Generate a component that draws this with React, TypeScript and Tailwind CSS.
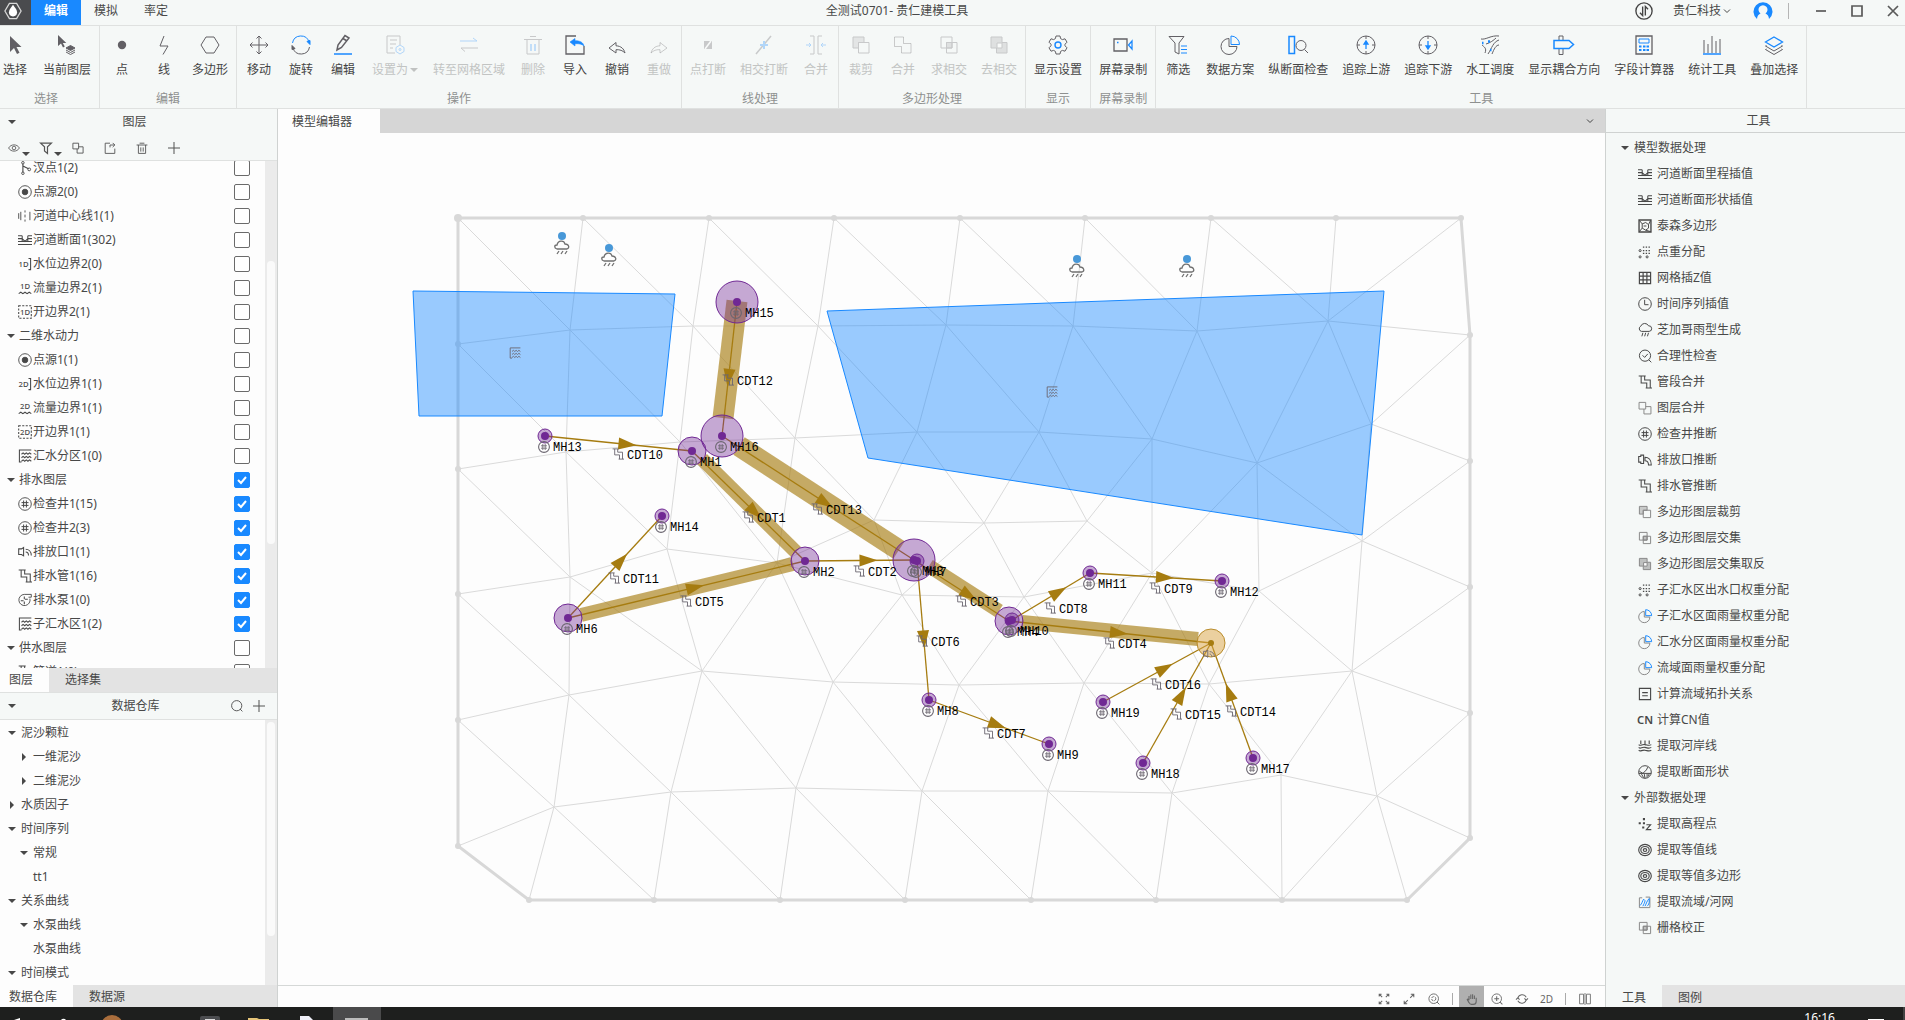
import React, { useState } from "react";
import clsx from "clsx";

const BLUE = "#1989ff";

const icons: Record<string, React.ReactNode> = {
  // ribbon
  cursor: <path d="M5 1v16l4-4 3 6 2.500-1.200-3-5.800h5z" fill="currentColor" stroke="none" />,
  layerCursor: (
    <>
      <path d="M1 0v11l3-2.500 2 4 1.800-1-2-3.500h3.500z" fill="currentColor" stroke="none" />
      <path d="M13.500 10.500l4.500 2.500-4.500 2.500L9 13z" fill="currentColor" />
      <path d="M9 15l4.500 2.500L18 15M9 17l4.500 2.500L18 17" />
    </>
  ),
  dot: <circle cx="10" cy="10" r="4.200" fill="currentColor" stroke="none" />,
  polyline: <path d="M10 1L6 11h8l-5 8.500" />,
  hexagon: <path d="M6 2h8l5 8-5 8H6l-5-8z" />,
  move: <path d="M10 1v18M1 10h18M7.500 3.500L10 1l2.500 2.500M7.500 16.500L10 19l2.500-2.500M3.500 7.500L1 10l2.500 2.500M16.500 7.500L19 10l-2.500 2.500" />,
  rotate: (
    <>
      <path d="M1.500 8a8.500 8.500 0 0 1 16.500-1" stroke={BLUE} />
      <path d="M16 6.500l3-1v4z" fill={BLUE} stroke={BLUE} />
      <path d="M18.500 12a8.500 8.500 0 0 1-16.500 1" />
      <path d="M4 13.500l-3 1v-4z" fill="currentColor" />
    </>
  ),
  pencil: (
    <>
      <path d="M4 15l1-5 7-9.500 4 2.500-7.500 9.500zM10 3.500l4 2.500" strokeWidth="1.500" />
      <path d="M1 19h18" stroke={BLUE} strokeWidth="1.500" />
    </>
  ),
  setAs: (
    <>
      <path d="M10 18H2V1h13v9M5 5h7M5 9h6M5 13h3" />
      <path d="M15 10l4 2.500v4L15 19l-4-2.500v-4z" stroke={BLUE} />
      <circle cx="15" cy="14.500" r="1" stroke={BLUE} />
    </>
  ),
  swap: (
    <>
      <path d="M1 6h17l-4-3" stroke={BLUE} />
      <path d="M19 13H2l4 3.500" />
    </>
  ),
  trash: (
    <>
      <path d="M1 4.500h18M7 1.500h6M4 5v14h12V5" />
      <path d="M8 9v7M12 9v7" stroke={BLUE} strokeWidth="1.500" />
    </>
  ),
  importIn: (
    <>
      <path d="M11 1H1v18h18V11" strokeWidth="1.300" />
      <path d="M5 7l5-3.500v2.200c5 0 8 1.500 9 5.300-2-2-5-2.500-9-2.300V11z" fill={BLUE} stroke={BLUE} strokeWidth=".6" />
    </>
  ),
  undo: <path d="M2 13l7-5.500v3.300c5 .2 8 3 9 7.200-2.500-2.500-5-3.500-9-3.300V18z" />,
  redo: <path d="M18 13l-7-5.500v3.300c-5 .2-8 3-9 7.200 2.500-2.500 5-3.500 9-3.300V18z" />,
  breakPoint: (
    <>
      <path d="M6 6h8v8H6z" fill="currentColor" stroke="none" />
      <path d="M7 14l6-8" stroke="#fff" strokeWidth="1.500" />
    </>
  ),
  breakCross: (
    <>
      <path d="M17 1L2 19" strokeWidth="1.500" />
      <path d="M6 10h8M10 6v8" stroke={BLUE} strokeWidth="2" />
    </>
  ),
  mergeLine: (
    <>
      <path d="M4 1h4v18H4M16 1h-4v18h4" />
      <path d="M0 10h5M3 8l2 2-2 2M20 10h-5M17 8l-2 2 2 2" stroke={BLUE} />
    </>
  ),
  clip: (
    <>
      <path d="M2 2h11v5.500H7.500V13H2z" fill="currentColor" fillOpacity=".4" />
      <path d="M7.500 7.500H18V18H7.500z" />
    </>
  ),
  merge: <path d="M1.500 2h9v6.500H18V18H8.500v-6.500h-7z" />,
  mergeTwo: <path d="M1.500 2h9.500v9.500H1.500zM11 8h7.500v10.500H8.500v-7" />,
  intersect: (
    <>
      <path d="M2 2h11v11H2zM7.500 7.500H18V18H7.500z" />
      <path d="M7.500 7.500H13V13H7.500z" fill="currentColor" fillOpacity=".5" />
    </>
  ),
  exclude: (
    <>
      <path d="M2 2h11v5.500h5V18H7.500v-5H2z" fill="currentColor" fillOpacity=".5" />
      <path d="M8 8h5v5H8z" fill="#fff" />
    </>
  ),
  gear: (
    <>
      <path d="M8 1h4l.6 2.600 1.800 1L17 3.800l2 3.400-2 2v1.600l2 2-2 3.400-2.600-.8-1.800 1L12 19H8l-.6-2.600-1.800-1-2.600.8-2-3.400 2-2V9.200l-2-2 2-3.400 2.600.8 1.800-1z" />
      <circle cx="10" cy="10" r="3" stroke={BLUE} strokeWidth="1.400" />
    </>
  ),
  record: (
    <>
      <path d="M1 4h13v12H1z" strokeWidth="1.300" />
      <path d="M4 7.500h1.500" stroke={BLUE} strokeWidth="1.500" />
      <path d="M19 6v8l-3.500-4z" stroke={BLUE} strokeWidth="1.300" />
    </>
  ),
  filter: (
    <>
      <path d="M1 1.500h15l-5 6.500v11l-4-2V8z" />
      <path d="M13 11h6M13 14.500h6M13 18h6" stroke={BLUE} />
    </>
  ),
  pie: (
    <>
      <path d="M9 3.500a8 8 0 1 0 8 8H9z" />
      <path d="M11 1v8.500h8.500A8.500 8.500 0 0 0 11 1z" stroke={BLUE} />
    </>
  ),
  profile: (
    <>
      <path d="M1 1.500h5.500v17H1z" stroke={BLUE} strokeWidth="1.500" />
      <circle cx="13" cy="10.500" r="5" />
      <path d="M16.500 14.500L20 18" />
    </>
  ),
  traceUp: (
    <>
      <circle cx="10" cy="10" r="9" />
      <path d="M10 1v3M10 16v3M1 10h3M16 10h3" />
      <path d="M10 14V7M8 9l2-3 2 3z" fill={BLUE} stroke={BLUE} strokeWidth="1.300" />
    </>
  ),
  traceDown: (
    <>
      <circle cx="10" cy="10" r="9" />
      <path d="M10 1v3M10 16v3M1 10h3M16 10h3" />
      <path d="M10 6v7M8 11l2 3 2-3z" fill={BLUE} stroke={BLUE} strokeWidth="1.300" />
    </>
  ),
  schedule: (
    <>
      <path d="M1 4c5 1 10-4 18-3M5 18c2-5-1-6-3-8M8 19c4-6 5-12 11-14M12 19c2-5 4-9 7-9M6 9c4-1 8-4 10-6" />
      <path d="M8 6.500h2M2 8h1.500M10 15h1.500" stroke={BLUE} strokeWidth="2.500" />
    </>
  ),
  signpost: (
    <>
      <path d="M5 5V1h4v4M5 14v5.500h4V14" />
      <path d="M0 5.500h15l4.500 4-4.500 4H0z" stroke={BLUE} strokeWidth="1.500" />
    </>
  ),
  calculator: (
    <>
      <path d="M2 1h16v18H2z" strokeWidth="1.300" />
      <path d="M5 4h10v4H5z" stroke={BLUE} />
      <path d="M5 11.500h2.500M9 11.500h2.500M12.500 11.500H15M5 15h2.500M9 15h2.500M12.500 15H15" stroke={BLUE} strokeWidth="2" />
    </>
  ),
  bars: (
    <>
      <path d="M2 5v13M6 9v9M10 1v17M14 6v12M18 4v14" />
      <path d="M1 19h18" stroke={BLUE} strokeWidth="1.500" />
    </>
  ),
  overlay: (
    <>
      <path d="M10 2l8.500 5-8.500 5-8.500-5z" stroke={BLUE} strokeWidth="1.300" />
      <path d="M2.500 10.500L1.500 11l8.500 5 8.500-5-1-.5M2.500 14l-1 .5 8.500 5 8.500-5-1-.5" />
    </>
  ),
  // layer and tool lists
  branch: (
    <>
      <path d="M7 4v12M7 7l8 4" strokeWidth="1.600" />
      <circle cx="7" cy="2.500" r="1.800" />
      <circle cx="7" cy="17.500" r="1.800" />
      <circle cx="16" cy="12" r="2" />
    </>
  ),
  source: (
    <>
      <circle cx="10" cy="10" r="9" />
      <circle cx="10" cy="10" r="4" fill="currentColor" />
    </>
  ),
  centerline: <path d="M4 4v12M10 2v3M10 8v4M10 15v3M17 4v12M1 6v8" />,
  section: <path d="M0 4h6M0 8h6M0 12h6M0 16.500h20M14 4h6M14 8h6M14 12h6M6 4v8h8V4M6 8l4 4 4-4" strokeWidth="1.500" />,
  catchment: (
    <path
      d="M19 1.500H2v17h3M5 7.500l2.300-2 2.300 2 2.300-2 2.300 2 2.300-2L19 7.500M5 12.500l2.300-2 2.300 2 2.300-2 2.300 2 2.300-2 2.500 2M5 17.500l2.300-2 2.300 2 2.300-2 2.300 2 2.300-2 2.500 2"
      strokeWidth="1.500"
    />
  ),
  manhole: (
    <>
      <circle cx="10" cy="10" r="9" />
      <path d="M8 5v10M12 5v10M5 8h10M5 12h10" strokeWidth="1.400" />
    </>
  ),
  outlet: <path d="M1 5h3V3h4v12H4v-2H1zM10 6c5 0 9 4 9 11h-4c0-4-2-6-5-6z" strokeWidth="1.500" />,
  outletSmall: <path d="M1 5.500h4l3-2v12l-3-2H1zM11 6c4 0 8 3 8 9M11 10c2 0 4 2 4 5" strokeWidth="1.500" />,
  pipe: <path d="M1 1.500h10M4.500 1.500v10h8v7M9.500 1.500v5.500h8v11.500M11 18.500h9" strokeWidth="1.500" />,
  pump: (
    <>
      <path d="M17 8a8 8 0 1 1-8-6h10v4h-4" />
      <path d="M9 5v4M9 12v4M4 11h4M10 9h4" strokeWidth="1.500" />
    </>
  ),
  voronoi: (
    <>
      <path d="M1.500 1.500h17v17h-17z" strokeWidth="2" />
      <path d="M6 7l5-2 4 3v5l-4 3-5-3zM2 2l4 5M18 2l-3 6M2 18l4-5M18 18l-7-2M8 10h4" />
    </>
  ),
  points: (
    <>
      <path d="M7 3h2M11 3h2M15 3h2M7 8h2M11 8h2M15 8h2M7 12h2M11 12h2M15 12h2" strokeWidth="2" />
      <circle cx="3" cy="8" r="1.500" />
      <circle cx="3" cy="17" r="1.500" />
      <circle cx="13" cy="17" r="1.500" />
    </>
  ),
  grid: <path d="M2 2h16v16H2zM7.300 2v16M12.700 2v16M2 7.300h16M2 12.700h16" strokeWidth="1.700" />,
  clock: (
    <>
      <circle cx="10" cy="10" r="9" />
      <path d="M9.500 4v7H15" />
    </>
  ),
  rain: <path d="M5 12a4 4 0 0 1-1-7.500A6 6 0 0 1 15 4a4 4 0 0 1 1 8zM7 14l-1.500 5M11 14l-1.500 5M15 14l-1.500 5" strokeWidth="1.400" />,
  check: (
    <>
      <circle cx="10" cy="9.500" r="8" />
      <path d="M6.500 9l3 3 4.500-5M15.500 15.500L19 19" strokeWidth="1.400" />
    </>
  ),
  topology: <path d="M2 2h16v16H2zM6 8h8M6 12.500h8" strokeWidth="1.600" />,
  shore: <path d="M4 2v5M10 2v5M16 2v5M1 8c3 3 4-1 9 0s6 2 9 0M1 12c3 3 4-1 9 0s6 2 9 0M1 16c3 3 4-1 9 0s6 2 9 0" strokeWidth="1.600" />,
  sectionShape: (
    <>
      <circle cx="10" cy="10" r="9" />
      <path d="M2 9l5 3 5-5 2-4M1 12h18M5 13l3 5M9 13l1 6M13 13v5M16 12l-1 4" strokeWidth="1.400" />
    </>
  ),
  elevation: (
    <>
      <path d="M7 3h3M1 9h3M7 9h3M6 15h3" strokeWidth="3" />
      <path d="M12 11h6l-6 7h7" strokeWidth="1.600" />
    </>
  ),
  contour: (
    <>
      <ellipse cx="10" cy="10" rx="9" ry="8" strokeWidth="1.600" />
      <ellipse cx="10" cy="10" rx="6" ry="5" strokeWidth="1.600" />
      <ellipse cx="10" cy="10" rx="2.500" ry="2" strokeWidth="1.600" />
    </>
  ),
  basin: (
    <>
      <path d="M6 4H2v14h15V3h-6" />
      <path d="M3 15c3-3 3-6 5-9l2 2c0 3-2 5-3 8M10 16c2-4 3-8 6-11v6c-1 3-2 4-3 5" stroke={BLUE} strokeWidth="1.400" />
    </>
  ),
  // small toolbars
  eye: (
    <>
      <path d="M1 10c4-7 14-7 18 0-4 7-14 7-18 0z" strokeWidth="1.400" />
      <circle cx="10" cy="10" r="3" strokeWidth="1.400" />
    </>
  ),
  funnel: <path d="M1 2h18l-6.500 6v11l-5-4V8z" strokeWidth="2" />,
  exportOut: <path d="M10 2H2v17h16v-8M10 9V5h8M14.500 1.500L18 5l-3.500 3.500" strokeWidth="1.500" />,
  bin: <path d="M1 5h18M6 2h8M4 5v14h12V5M8 9v7M12 9v7" strokeWidth="1.500" />,
  plus: <path d="M10 0v20M0 10h20" strokeWidth="1.700" />,
  search: (
    <>
      <circle cx="9.500" cy="9.500" r="8.500" strokeWidth="1.600" />
      <path d="M15 15l4 4" strokeWidth="1.600" />
    </>
  ),
  extent: <path d="M7 7L2 2M2 6V2h4M13 7l5-5M14 2h4v4M7 13l-5 5M2 14v4h4M13 13l5 5M18 14v4h-4" strokeWidth="1.700" />,
  expand: <path d="M12 8l6-6M13 2h5v5M8 12l-6 6M2 13v5h5" strokeWidth="1.700" />,
  zoomFit: (
    <>
      <circle cx="9.500" cy="9.500" r="8" strokeWidth="1.500" />
      <circle cx="9.500" cy="9.500" r="3.500" strokeWidth="1.500" strokeDasharray="4 1.500" />
      <path d="M15 15l4 4" strokeWidth="1.600" />
    </>
  ),
  hand: <path d="M5 12V5M8 10V2.500M11 10V2M14 10V4M17 8v6c0 3-2 5-5 5H9c-2 0-3-1-4-3l-3-5c1-1.500 2-.5 3 1" strokeWidth="1.800" />,
  zoomIn: (
    <>
      <circle cx="9.500" cy="9.500" r="8" strokeWidth="1.500" />
      <path d="M5.500 9.500h8M9.500 5.500v8M15 15l4 4" strokeWidth="1.700" />
    </>
  ),
  cycle: <path d="M3 9a7.500 7.500 0 0 1 14-2M17 11a7.500 7.500 0 0 1-14 2M0 11l3-3 3 3M20 9l-3 3-3-3" strokeWidth="1.700" />,
  split: <path d="M7.500 2H1v16h6.500zM12.500 2H19v16h-6.500zM10 0v20" strokeWidth="1.400" />,
};

const Icon = ({ name, className }: { name: string; className?: string }) => {
  // boundary icons carry a short tag (1D / 2D) inside the drawing
  const tag = name.match(/^(level|flow|open)([12])$/);
  if (tag || name === "cn") {
    return (
      <svg viewBox="0 0 20 20" className={clsx("overflow-visible", className)} fill="none" stroke="currentColor">
        <text
          x={tag && tag[1] === "level" ? 8 : 10}
          y={tag ? (tag[1] === "flow" ? 12 : 14) : 16}
          textAnchor="middle"
          fontSize={tag ? 11 : 16}
          fill="currentColor"
          stroke="none"
          className={tag ? "font-medium" : "font-semibold"}
        >
          {tag ? `${tag[2]}D` : "CN"}
        </text>
        {tag && tag[1] === "level" && <path d="M15 2h3v16h-3" strokeWidth="1.500" />}
        {tag && tag[1] === "flow" && <path d="M1 18l3-2 3 2 3-2 3 2 3-2 3 2" strokeWidth="1.500" />}
        {tag && tag[1] === "open" && <path d="M1 1h18v18H1z" strokeWidth="1.500" strokeDasharray="3 2" />}
      </svg>
    );
  }
  return (
    <svg viewBox="0 0 20 20" className={clsx("overflow-visible", className)} fill="none" stroke="currentColor">
      {icons[name]}
    </svg>
  );
};

const Caret = ({ open = true, className }: { open?: boolean; className?: string }) => (
  <svg viewBox="0 0 8 8" className={clsx("h-2 w-2 shrink-0", className)}>
    <path d={open ? "M0 2h8L4 6z" : "M2 0v8l4-4z"} fill="#484848" />
  </svg>
);

const ribbon = [
  { title: "选择", items: [["cursor", "选择"], ["layerCursor", "当前图层"]] },
  { title: "编辑", items: [["dot", "点"], ["polyline", "线"], ["hexagon", "多边形"]] },
  {
    title: "操作",
    items: [
      ["move", "移动"],
      ["rotate", "旋转"],
      ["pencil", "编辑"],
      ["setAs", "设置为", "off", "menu"],
      ["swap", "转至网格区域", "off"],
      ["trash", "删除", "off"],
      ["importIn", "导入"],
      ["undo", "撤销"],
      ["redo", "重做", "off"],
    ],
  },
  { title: "线处理", items: [["breakPoint", "点打断", "off"], ["breakCross", "相交打断", "off"], ["mergeLine", "合并", "off"]] },
  {
    title: "多边形处理",
    items: [["clip", "裁剪", "off"], ["merge", "合并", "off"], ["intersect", "求相交", "off"], ["exclude", "去相交", "off"]],
  },
  { title: "显示", items: [["gear", "显示设置"]] },
  { title: "屏幕录制", items: [["record", "屏幕录制"]] },
  {
    title: "工具",
    items: [
      ["filter", "筛选"],
      ["pie", "数据方案"],
      ["profile", "纵断面检查"],
      ["traceUp", "追踪上游"],
      ["traceDown", "追踪下游"],
      ["schedule", "水工调度"],
      ["signpost", "显示耦合方向"],
      ["calculator", "字段计算器"],
      ["bars", "统计工具"],
      ["overlay", "叠加选择"],
    ],
  },
];

// icon is empty for a group row
const layers: [string, string, boolean][] = [
  ["branch", "汊点1(2)", false],
  ["source", "点源2(0)", false],
  ["centerline", "河道中心线1(1)", false],
  ["section", "河道断面1(302)", false],
  ["level1", "水位边界2(0)", false],
  ["flow1", "流量边界2(1)", false],
  ["open1", "开边界2(1)", false],
  ["", "二维水动力", false],
  ["source", "点源1(1)", false],
  ["level2", "水位边界1(1)", false],
  ["flow2", "流量边界1(1)", false],
  ["open2", "开边界1(1)", false],
  ["catchment", "汇水分区1(0)", false],
  ["", "排水图层", true],
  ["manhole", "检查井1(15)", true],
  ["manhole", "检查井2(3)", true],
  ["outletSmall", "排放口1(1)", true],
  ["pipe", "排水管1(16)", true],
  ["pump", "排水泵1(0)", true],
  ["catchment", "子汇水区1(2)", true],
  ["", "供水图层", false],
  ["pipe", "管道1(0)", false],
];

const dataTree: { label: string; level: number; state: "open" | "closed" | "leaf" }[] = [
  { label: "泥沙颗粒", level: 0, state: "open" },
  { label: "一维泥沙", level: 1, state: "closed" },
  { label: "二维泥沙", level: 1, state: "closed" },
  { label: "水质因子", level: 0, state: "closed" },
  { label: "时间序列", level: 0, state: "open" },
  { label: "常规", level: 1, state: "open" },
  { label: "tt1", level: 1, state: "leaf" },
  { label: "关系曲线", level: 0, state: "open" },
  { label: "水泵曲线", level: 1, state: "open" },
  { label: "水泵曲线", level: 1, state: "leaf" },
  { label: "时间模式", level: 0, state: "open" },
];

const toolGroups = [
  {
    title: "模型数据处理",
    items: [
      ["section", "河道断面里程插值"],
      ["section", "河道断面形状插值"],
      ["voronoi", "泰森多边形"],
      ["points", "点重分配"],
      ["grid", "网格插Z值"],
      ["clock", "时间序列插值"],
      ["rain", "芝加哥雨型生成"],
      ["check", "合理性检查"],
      ["pipe", "管段合并"],
      ["mergeTwo", "图层合并"],
      ["manhole", "检查井推断"],
      ["outlet", "排放口推断"],
      ["pipe", "排水管推断"],
      ["clip", "多边形图层裁剪"],
      ["intersect", "多边形图层交集"],
      ["exclude", "多边形图层交集取反"],
      ["points", "子汇水区出水口权重分配"],
      ["pie", "子汇水区面雨量权重分配"],
      ["pie", "汇水分区面雨量权重分配"],
      ["pie", "流域面雨量权重分配"],
      ["topology", "计算流域拓扑关系"],
      ["cn", "计算CN值"],
      ["shore", "提取河岸线"],
      ["sectionShape", "提取断面形状"],
    ],
  },
  {
    title: "外部数据处理",
    items: [
      ["elevation", "提取高程点"],
      ["contour", "提取等值线"],
      ["contour", "提取等值多边形"],
      ["basin", "提取流域/河网"],
      ["intersect", "栅格校正"],
    ],
  },
];

const paleIcons = ["mergeTwo", "clip", "intersect", "exclude", "pie", "basin"];

type Pt = [number, number];

const boundary: Pt[] = [
  [458, 218], [583, 218], [709, 218], [834, 218], [960, 218], [1085, 218], [1211, 218], [1336, 218], [1461, 218],
  [1470, 335], [1470, 461], [1470, 587], [1470, 713], [1470, 838],
  [1407, 900], [1282, 900], [1156, 900], [1031, 900], [905, 900], [780, 900], [654, 900], [529, 900],
  [458, 846], [458, 720], [458, 594], [458, 469], [458, 344],
];

const inner: Record<string, Pt> = {
  a0: [570, 330], a1: [693, 326], a2: [818, 326], a3: [946, 325], a4: [1073, 326], a5: [1197, 331], a6: [1328, 321],
  b0: [566, 452], b1: [680, 442], b2: [795, 438], b3: [917, 432], b4: [1039, 432], b5: [1152, 439], b6: [1257, 463], b7: [1371, 424],
  c0: [570, 577], c1: [667, 549], c2: [777, 563], c3: [874, 520], c4: [984, 523], c5: [1087, 521], c6: [1362, 541],
  d0: [902, 595], d1: [1024, 597], d2: [1152, 573], d3: [1259, 591],
  e0: [569, 695], e1: [702, 671], e2: [833, 682], e3: [959, 685], e4: [1084, 683], e5: [1209, 684], e6: [1352, 671],
  f0: [554, 807], f1: [671, 792], f2: [796, 788], f3: [922, 791], f4: [1048, 791], f5: [1172, 793], f6: [1281, 775], f7: [1377, 796],
};

// a number points into boundary, a name into inner
const edges = (
  "0-a0 1-a0 1-a1 2-a1 2-a2 3-a2 3-a3 4-a3 4-a4 5-a4 5-a5 6-a5 6-a6 7-a6 8-a6 9-a6 " +
  "26-a0 a0-a1 a1-a2 a2-a3 a3-a4 a4-a5 a5-a6 a0-b0 a0-b1 26-b0 a1-b1 a1-b2 a2-b2 a2-b3 a3-b3 a3-b4 a4-b4 a4-b5 a5-b5 a5-b6 a6-b6 a6-b7 9-b7 10-b7 b6-b7 " +
  "25-b0 b0-b1 b1-b2 b2-b3 b3-b4 b4-b5 b5-b6 b6-c6 10-c6 b7-c6 " +
  "25-c0 b0-c0 b0-c1 b1-c1 b1-c2 b2-c2 b2-c3 b3-c3 b3-c4 b4-c4 b4-c5 b5-c5 b5-d2 b6-d2 b6-d3 c6-d3 c6-e6 c6-11 " +
  "24-c0 c0-c1 c1-c2 c2-c3 c2-d0 c3-c4 c3-d0 c4-d0 c4-d1 c4-c5 c5-d1 c5-d2 d1-d2 d2-d3 d0-d1 " +
  "24-e0 c0-e0 c0-e1 c1-e1 c2-e1 c2-e2 d0-e2 d0-e3 d1-e3 d1-e4 d2-e4 d2-e5 d3-e5 d3-e6 e6-11 e6-12 " +
  "23-e0 e0-e1 e1-e2 e2-e3 e3-e4 e4-e5 e5-e6 23-f0 e0-f0 e0-f1 e1-f1 e1-f2 e2-f2 e2-f3 e3-f3 e3-f4 e4-f4 e4-f5 e5-f5 e5-f6 e6-f6 e6-f7 12-f7 13-f7 " +
  "f0-f1 f1-f2 f2-f3 f3-f4 f4-f5 f5-f6 f6-f7 22-f0 21-f0 20-f0 20-f1 19-f1 19-f2 18-f2 18-f3 17-f3 17-f4 16-f4 16-f5 15-f5 15-f6 15-f7 14-f7"
)
  .split(" ")
  .map((e) => e.split("-").map((k) => inner[k] ?? boundary[Number(k)]));

const nodes: Record<string, { at: Pt; r: number }> = {
  MH15: { at: [737, 302], r: 21 },
  MH16: { at: [722, 436], r: 21 },
  MH1: { at: [692, 451], r: 14 },
  MH13: { at: [545, 436], r: 7 },
  MH14: { at: [662, 516], r: 7 },
  MH6: { at: [568, 618], r: 14 },
  MH2: { at: [805, 561], r: 14 },
  MH3: { at: [914, 560], r: 21 },
  MH7: { at: [917, 561], r: 7 },
  MH4: { at: [1009, 621], r: 14 },
  MH10: { at: [1012, 620], r: 7 },
  MH11: { at: [1090, 573], r: 7 },
  MH12: { at: [1222, 581], r: 7 },
  MH8: { at: [929, 700], r: 7 },
  MH9: { at: [1049, 744], r: 7 },
  MH19: { at: [1103, 702], r: 7 },
  MH18: { at: [1143, 763], r: 7 },
  MH17: { at: [1253, 758], r: 7 },
};

const outlet: Pt = [1211, 643];

const conduits: { id: string; from: string; to: string; label: Pt }[] = [
  { id: "CDT1", from: "MH1", to: "MH2", label: [748, 517] },
  { id: "CDT2", from: "MH2", to: "MH3", label: [859, 571] },
  { id: "CDT3", from: "MH3", to: "MH4", label: [961, 601] },
  { id: "CDT4", from: "MH4", to: "OUT", label: [1109, 643] },
  { id: "CDT5", from: "MH6", to: "MH2", label: [686, 601] },
  { id: "CDT6", from: "MH7", to: "MH8", label: [922, 641] },
  { id: "CDT7", from: "MH8", to: "MH9", label: [988, 733] },
  { id: "CDT8", from: "MH10", to: "MH11", label: [1050, 608] },
  { id: "CDT9", from: "MH11", to: "MH12", label: [1155, 588] },
  { id: "CDT10", from: "MH13", to: "MH1", label: [618, 454] },
  { id: "CDT11", from: "MH6", to: "MH14", label: [614, 578] },
  { id: "CDT12", from: "MH15", to: "MH16", label: [728, 380] },
  { id: "CDT13", from: "MH16", to: "MH3", label: [817, 509] },
  { id: "CDT14", from: "MH17", to: "OUT", label: [1231, 711] },
  { id: "CDT15", from: "MH18", to: "OUT", label: [1176, 714] },
  { id: "CDT16", from: "MH19", to: "OUT", label: [1156, 684] },
];

const bands: [number, number, number, number, number][] = [
  [737, 301, 723, 418, 21],
  [702, 459, 796, 552, 14],
  [581, 615, 793, 564, 14],
  [739, 446, 899, 550, 21],
  [929, 566, 999, 611, 14],
  [1022, 622, 1198, 639, 14],
];

const gauges: Pt[] = [[562, 236], [609, 248], [1077, 259], [1187, 259]];

const MapIcon = ({ name, x, y }: { name: string; x: number; y: number }) => (
  <g transform={`translate(${x - 6} ${y - 6}) scale(0.6)`} fill="none" stroke="#6b6670" strokeWidth="1.800">
    {icons[name]}
  </g>
);

const NetworkMap = () => {
  const place = (key: string): Pt => (key === "OUT" ? outlet : nodes[key].at);

  return (
    <svg viewBox="278 133 1327 852" className="h-full w-full" fontFamily='"Liberation Mono", monospace' fontSize="12">
      <g stroke="#dadada">
        {edges.map(([p, q], i) => (
          <line key={i} x1={p[0]} y1={p[1]} x2={q[0]} y2={q[1]} />
        ))}
      </g>
      <polygon points={boundary.join(" ")} fill="none" stroke="#d8d8d8" strokeWidth="3" />
      {boundary.map(([x, y], i) => (
        <circle key={i} cx={x} cy={y} r={i === 0 ? 4 : 3} fill="#d8d8d8" />
      ))}

      <g fill={BLUE} fillOpacity=".44" stroke={BLUE}>
        <polygon points="413,291 675,294 662,416 419,416" />
        <polygon points="827,311 1384,291 1362,535 868,458" />
      </g>
      <MapIcon name="catchment" x={515} y={353} />
      <MapIcon name="catchment" x={1052} y={392} />

      {gauges.map(([x, y]) => (
        <g key={x}>
          <circle cx={x} cy={y} r="4" fill="#4898d8" />
          <path
            d={`M${x - 5} ${y + 13}c-3-1-3-4 0-4 1-5 7-5 8-1 4 0 5 4 2 5zM${x - 3} ${y + 15}l-2 3M${x + 1} ${y + 15}l-2 3M${x + 5} ${y + 15}l-2 3`}
            fill="none"
            stroke="#707070"
            strokeWidth="1.300"
          />
        </g>
      ))}

      {bands.map(([x1, y1, x2, y2, w]) => (
        <line key={x1} x1={x1} y1={y1} x2={x2} y2={y2} stroke="#a67c10" strokeOpacity=".64" strokeWidth={w} />
      ))}
      {conduits.map(({ id, from, to }) => {
        const [x1, y1] = place(from);
        const [x2, y2] = place(to);
        const angle = (Math.atan2(y2 - y1, x2 - x1) * 180) / Math.PI;
        return (
          <g key={id}>
            <line x1={x1} y1={y1} x2={x2} y2={y2} stroke="#a67c10" strokeWidth="1.300" />
            <path
              d="M0-6L18 0 0 6z"
              fill="#a67c10"
              transform={`translate(${(x1 + x2) / 2} ${(y1 + y2) / 2}) rotate(${angle})`}
            />
          </g>
        );
      })}

      {Object.entries(nodes).map(([id, { at, r }]) => (
        <g key={id}>
          <circle cx={at[0]} cy={at[1]} r={r} fill="#702894" fillOpacity=".4" stroke="#702894" />
          <circle cx={at[0]} cy={at[1]} r="4" fill="#702894" />
        </g>
      ))}
      <circle cx={outlet[0]} cy={outlet[1]} r="14" fill="#d9a441" fillOpacity=".5" stroke="#b98c2c" />
      <circle cx={outlet[0]} cy={outlet[1]} r="3" fill="#a67c10" />
      <MapIcon name="outletSmall" x={outlet[0] - 2} y={outlet[1] + 11} />

      {conduits.map(({ id, label: [x, y] }) => (
        <g key={id}>
          <MapIcon name="pipe" x={x} y={y} />
          <text x={x + 9} y={y + 5}>{id}</text>
        </g>
      ))}
      {Object.entries(nodes).map(([id, { at: [x, y] }]) => (
        <g key={id}>
          <MapIcon name="manhole" x={x - 1} y={y + 11} />
          <text x={x + 8} y={y + 15}>{id}</text>
        </g>
      ))}
    </svg>
  );
};

const TitleBar = () => (
  <header className="flex h-[26px] shrink-0 border-b border-[#dfe1e0]">
    <div className="flex w-[31px] items-center justify-center bg-[#4a4b4e] pr-1.5 pb-1 text-white">
      <svg viewBox="0 0 20 20" className="h-[18px] w-[18px]" fill="none" stroke="#d8d8d8" strokeWidth="1.400">
        <path d="M6 1.500h8l5 8.500-5 8.500H6L1 10z" />
        <path d="M10 3c3 4 4.500 6 4.500 8.500a4.500 4.500 0 0 1-9 0C5.500 9 7 7 10 3z" fill="#fff" stroke="none" />
      </svg>
    </div>
    <nav className="flex">
      {["编辑", "模拟", "率定"].map((tab, i) => (
        <button
          key={tab}
          className={clsx("w-[50px] pb-1 leading-4", i === 0 ? "bg-[#1989ff] font-bold text-white" : "text-[#484848]")}
        >
          {tab}
        </button>
      ))}
    </nav>
    <h1 className="flex-1 pt-[3px] text-center leading-4">全测试0701- 贵仁建模工具</h1>
    <div className="flex w-[292px] items-center justify-end pb-1">
      <button aria-label="同步" className="mr-5">
        <svg viewBox="0 0 20 20" className="h-[18px] w-[18px]" fill="none" stroke="#444" strokeWidth="1.500">
          <circle cx="10" cy="10" r="9" />
          <path d="M8.500 5v10l-3-3M11.500 15V5l3 3" />
        </svg>
      </button>
      <button className="flex items-center gap-0.5 leading-4">
        贵仁科技
        <svg viewBox="0 0 8 8" className="h-2 w-2" fill="none" stroke="#484848">
          <path d="M1 2.500l3 3 3-3" />
        </svg>
      </button>
      <button aria-label="用户" className="ml-[22px]">
        <svg viewBox="0 0 20 20" className="h-5 w-5">
          <path d="M4 18a9.500 9.500 0 1 1 12 0c0-3-2-5-3.500-5.500a4.500 4.500 0 1 0-5 0C6 13 4 15 4 18z" fill={BLUE} />
        </svg>
      </button>
      <span className="ml-[15px] h-4 w-px bg-[#b5b5b5]" />
      {["M1 6h10", "M1 1h10v10H1z", "M1 1l10 10M11 1L1 11"].map((d, i) => (
        <button key={d} aria-label={["最小化", "最大化", "关闭"][i]} className={i === 0 ? "ml-[26px]" : "ml-6"}>
          <svg viewBox="0 0 12 12" className="h-3 w-3" fill="none" stroke="#5a5a5a" strokeWidth="1.700">
            <path d={d} />
          </svg>
        </button>
      ))}
      <span className="w-1.5" />
    </div>
  </header>
);

const Ribbon = () => (
  <div className="flex h-[83px] shrink-0 border-b border-[#dfe1e0]">
    {ribbon.map((group, g) => (
      <section key={group.title} className={clsx("flex shrink-0 flex-col border-r border-[#dfe1e0] px-px", g === 0 && "-ml-[7px]")}>
        <div className="flex pt-[9px]">
          {group.items.map(([icon, label, off, menu]) => (
            <button
              key={label}
              disabled={!!off}
              className={clsx("flex flex-col items-center gap-[7px]", menu ? "w-[62px]" : "min-w-[42px] px-[7px]")}
            >
              <Icon name={icon} className={clsx("h-5 w-5 text-[#626065]", off && "opacity-30")} />
              <span className={clsx("flex items-center gap-0.5 leading-4", off ? "text-[#c2c4c3]" : "text-[#444]")}>
                {label}
                {menu && <Caret className="opacity-30" />}
              </span>
            </button>
          ))}
        </div>
        <h2 className="mt-[13px] text-center leading-4 text-[#8e908f]">{group.title}</h2>
      </section>
    ))}
  </div>
);

const ScrollTrack = ({ before, thumb, after }: { before: string; thumb: string; after: string }) => (
  <div className="flex w-3 shrink-0 flex-col items-center bg-[#ebebeb]">
    <span className={before} />
    <span className={clsx("w-2 rounded-full bg-[#fafafa]", thumb)} />
    <span className={after} />
  </div>
);

const LayerPanel = () => {
  const [shown, setShown] = useState(layers.map((l) => l[2]));

  return (
    <section className="flex min-h-0 flex-[584] flex-col">
      <div className="border-b border-[#dfe1e0]">
        <div className="flex h-6 items-center px-2 pt-0.5">
          <Caret />
          <h2 className="flex-1 pr-4 text-center leading-4">图层</h2>
        </div>
        <div className="flex h-[27px] items-center gap-5 pt-0.5 pl-2 text-[#555]">
          <button aria-label="可见性" className="-mr-2.5 flex items-end gap-0.5">
            <Icon name="eye" className="h-3 w-3" />
            <Caret className="-mb-1" />
          </button>
          <button aria-label="筛选图层" className="-mr-2.5 flex items-end gap-0.5">
            <Icon name="funnel" className="h-3 w-3" />
            <Caret className="-mb-1" />
          </button>
          <button aria-label="合并图层"><Icon name="mergeTwo" className="h-3 w-3 stroke-[1.5]" /></button>
          <button aria-label="导出图层"><Icon name="exportOut" className="h-3 w-3" /></button>
          <button aria-label="删除图层"><Icon name="bin" className="h-3 w-3" /></button>
          <button aria-label="新建图层"><Icon name="plus" className="h-3 w-3" /></button>
        </div>
      </div>
      <div className="flex min-h-0 flex-1 overflow-hidden bg-[#fdfdfd]">
        <ul className="-mt-[5px] flex-1">
          {layers.map(([icon, label], i) => (
            <li key={label}>
              <label className={clsx("flex h-6 items-center pr-[15px]", icon ? "pl-[18px]" : "pl-[7px]")}>
                {icon ? <Icon name={icon} className="mr-px h-[14px] w-[14px] shrink-0 stroke-[1.3]" /> : <Caret className="mr-1" />}
                <span className="flex-1 leading-4">{label}</span>
                <span className="relative h-4 w-4">
                  <input
                    type="checkbox"
                    checked={shown[i]}
                    onChange={() => setShown(shown.map((s, n) => (n === i ? !s : s)))}
                    className="block h-4 w-4 appearance-none rounded-xs border border-[#6a6a6a] bg-white checked:border-[#1989ff] checked:bg-[#1989ff]"
                  />
                  {shown[i] && (
                    <svg viewBox="0 0 16 16" className="pointer-events-none absolute inset-0" fill="none" stroke="#fff" strokeWidth="2">
                      <path d="M4 8l3 3 5-6" />
                    </svg>
                  )}
                </span>
              </label>
            </li>
          ))}
        </ul>
        <ScrollTrack before="flex-[100]" thumb="flex-[283]" after="flex-[124]" />
      </div>
      <div className="flex h-[25px] shrink-0 border-b border-[#dfe1e0]">
        <div className="flex flex-1 bg-[#e3e3e3]">
          <button className="bg-[#fdfdfd] pr-4 pl-[9px] leading-4">图层</button>
          <button className="px-4 leading-4">选择集</button>
        </div>
      </div>
    </section>
  );
};

const DataPanel = () => (
  <section className="flex min-h-0 flex-[314] flex-col">
    <div className="flex h-[27px] shrink-0 items-center border-b border-[#dfe1e0] px-2">
      <Caret />
      <h2 className="flex-1 pl-6 text-center leading-4">数据仓库</h2>
      <button aria-label="搜索" className="mr-2.5"><Icon name="search" className="h-3 w-3 text-[#555]" /></button>
      <button aria-label="新建" className="mr-1"><Icon name="plus" className="h-3 w-3 text-[#555]" /></button>
    </div>
    <div className="flex min-h-0 flex-1 overflow-hidden bg-[#fdfdfd]">
      <ul className="flex-1 pt-px">
        {dataTree.map(({ label, level, state }, i) => (
          <li key={i} className={clsx("flex h-6 items-center", state === "leaf" ? "pl-[33px]" : level ? "pl-5" : "pl-2")}>
            {state !== "leaf" && <Caret open={state === "open"} className="mr-[5px]" />}
            <span className="leading-4">{label}</span>
          </li>
        ))}
      </ul>
      <ScrollTrack before="flex-[2]" thumb="flex-[214]" after="flex-[49]" />
    </div>
    <div className="flex h-[22px] shrink-0 bg-[#e3e3e3]">
      <button className="bg-[#fdfdfd] pt-0.5 pr-4 pl-[9px] leading-4">数据仓库</button>
      <button className="px-4 pt-0.5 leading-4">数据源</button>
    </div>
  </section>
);

const ViewButton = ({ name, label, active }: { name: string; label: string; active?: boolean }) => (
  <button aria-label={label} className={clsx("flex h-full w-[25px] items-center justify-center pt-1 text-[#666]", active && "bg-[#b0b0b0]")}>
    <Icon name={name} className="h-3 w-3" />
  </button>
);

const Editor = () => (
  <main className="flex min-w-0 flex-1 flex-col bg-[#fdfdfd]">
    <div className="flex h-6 shrink-0 items-center justify-between bg-[#d6d6d6]">
      <button className="h-full w-[102px] bg-[#fdfdfd] pt-0.5 pr-3.5 leading-4">模型编辑器</button>
      <button aria-label="更多" className="mr-[11px]">
        <svg viewBox="0 0 8 8" className="h-2 w-2" fill="none" stroke="#444">
          <path d="M1 2.500l3 3 3-3" />
        </svg>
      </button>
    </div>
    <div className="min-h-0 flex-1">
      <NetworkMap />
    </div>
    <div className="flex h-[22px] shrink-0 items-center justify-end border-t border-[#d5d8d7] pr-2">
      <ViewButton name="extent" label="全图" />
      <ViewButton name="expand" label="展开" />
      <ViewButton name="zoomFit" label="缩放至选择" />
      <span className="mx-1.5 mt-1 h-3 w-px bg-[#aaa]" />
      <ViewButton name="hand" label="平移" active />
      <ViewButton name="zoomIn" label="放大" />
      <ViewButton name="cycle" label="刷新" />
      <button className="w-[25px] pt-1 text-[10px] leading-4 text-[#666]">2D</button>
      <span className="mx-1.5 mt-1 h-3 w-px bg-[#aaa]" />
      <ViewButton name="split" label="分屏" />
    </div>
  </main>
);

const ToolPanel = () => (
  <aside className="flex w-[300px] shrink-0 flex-col border-l border-[#cfd2d1]">
    <h2 className="h-6 shrink-0 border-b border-[#cfd2d1] pt-1 pl-1.5 text-center leading-4">工具</h2>
    <div className="min-h-0 flex-1 overflow-hidden pt-0.5">
      {toolGroups.map((group) => (
        <section key={group.title}>
          <h3 className="flex h-[26px] items-center gap-[5px] pl-[15px] leading-4">
            <Caret />
            {group.title}
          </h3>
          <ul>
            {group.items.map(([icon, label]) => (
              <li key={label}>
                <button className="flex h-[26px] items-center gap-[5px] pl-8 leading-4">
                  <Icon name={icon} className={clsx("h-[14px] w-[14px] stroke-[1.4]", paleIcons.includes(icon) && "text-[#888]")} />
                  {label}
                </button>
              </li>
            ))}
          </ul>
        </section>
      ))}
    </div>
    <div className="flex h-[22px] shrink-0 bg-[#e3e3e3]">
      <button className="bg-[#f5f8f7] px-4 pt-1 leading-4">工具</button>
      <button className="px-4 pt-1 leading-4">图例</button>
    </div>
  </aside>
);

// only the upper edge of the system bar is on screen
const Taskbar = () => (
  <footer className="flex h-[13px] shrink-0 items-start overflow-hidden bg-[#1e1f1e]">
    <svg viewBox="0 0 400 13" className="h-[13px] w-[400px] shrink-0">
      <path d="M14 13l6-2v2zM61 13a3 3 0 0 1 5 0z" fill="#fff" />
      <circle cx="112" cy="19" r="11" fill="#a96d3c" />
      <rect x="200" y="9" width="20" height="8" rx="2" fill="#4c4d50" />
      <rect x="205" y="12" width="10" height="2" fill="#ddd" />
      <path d="M248 11h9l2 1h10v2h-21z" fill="#e6c478" />
      <path d="M300 9h9l4 4h-13z" fill="#f0f0f8" />
      <rect x="333" width="48" height="13" fill="#4a4a4b" />
      <rect x="345" y="11" width="23" height="2" fill="#bbb" />
    </svg>
    <span className="ml-auto pt-[3px] leading-4 text-white">16:16</span>
    <svg viewBox="0 0 70 13" className="h-[13px] w-[70px] shrink-0">
      <path d="M33 12h16v1H33z" fill="#fff" />
      <path d="M69 0v13" stroke="#666" />
    </svg>
  </footer>
);

const App = () => (
  <div className="flex h-screen flex-col overflow-hidden bg-[#f5f8f7] font-['Noto_Sans','Noto_Sans_CJK_SC',sans-serif] text-xs text-[#484848]">
    <TitleBar />
    <Ribbon />
    <div className="flex min-h-0 flex-1">
      <aside className="flex w-[278px] shrink-0 flex-col border-r border-[#cfd2d1]">
        <LayerPanel />
        <DataPanel />
      </aside>
      <Editor />
      <ToolPanel />
    </div>
    <Taskbar />
  </div>
);

export default App;
